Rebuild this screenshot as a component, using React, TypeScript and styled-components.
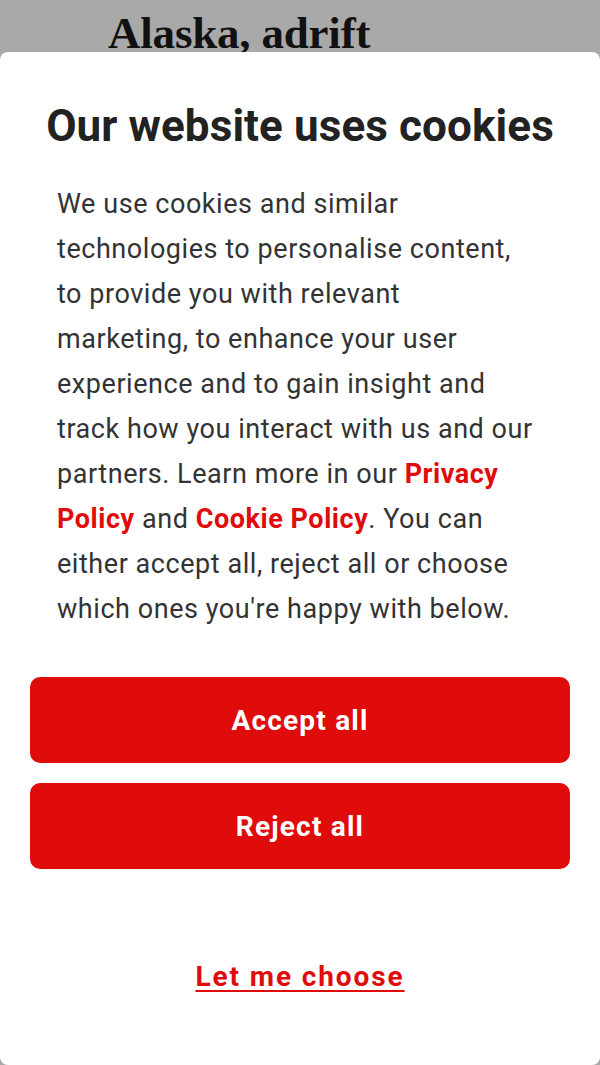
import styled, { createGlobalStyle } from 'styled-components'

const GlobalStyle = createGlobalStyle`
  html, body {
    margin: 0;
    padding: 0;
    background: #a9a9a9;
  }
  body {
    font-family: Roboto, "Noto Sans", sans-serif;
  }
`

function App() {
  return (
    <Page>
      <GlobalStyle />
      <Backdrop>
        <Headline>Alaska, adrift</Headline>
      </Backdrop>
      <Dialog>
        <Title>Our website uses cookies</Title>
        <Body>
          We use cookies and similar
          <br />
          technologies to personalise content,
          <br />
          to provide you with relevant
          <br />
          marketing, to enhance your user
          <br />
          experience and to gain insight and
          <br />
          track how you interact with us and our
          <br />
          partners. Learn more in our <Link href='#'>Privacy</Link>
          <br />
          <Link href='#'>Policy</Link> and <Link href='#'>Cookie Policy</Link>. You can
          <br />
          either accept all, reject all or choose
          <br />
          which ones you&apos;re happy with below.
        </Body>
        <Actions>
          <Button type='button'>Accept all</Button>
          <Button type='button'>Reject all</Button>
        </Actions>
        <Choose href='#'>Let me choose</Choose>
      </Dialog>
    </Page>
  )
}

const { Page, Backdrop, Headline, Dialog, Title, Body, Link, Actions, Button, Choose } = {
  Page: styled.div`
    width: 600px;
    height: 1065px;
    overflow: hidden;
    display: flex;
    flex-direction: column;
    background: #a9a9a9;
  `,
  Backdrop: styled.div`
    height: 52px;
    padding-left: 108px;
  `,
  Headline: styled.h1`
    margin: 0;
    padding-top: 14px;
    font-family: 'Liberation Serif', serif;
    font-size: 45px;
    font-weight: 700;
    line-height: 38px;
    color: #111;
    letter-spacing: -0.2px;
  `,
  Dialog: styled.div`
    flex: 1;
    display: flex;
    flex-direction: column;
    align-items: center;
    background: #fff;
    border-radius: 8px;
    padding: 46px 30px 0;
  `,
  Title: styled.h2`
    margin: 0;
    font-family: Roboto, sans-serif;
    font-size: 44px;
    font-weight: 700;
    line-height: 56px;
    color: #222;
    letter-spacing: 0.1px;
    text-align: center;
  `,
  Body: styled.p`
    margin: 28px 0 0;
    width: 486px;
    white-space: nowrap;
    font-family: Roboto, sans-serif;
    font-size: 27px;
    font-weight: 400;
    line-height: 45px;
    color: #333;
    letter-spacing: 0.55px;
  `,
  Link: styled.a`
    color: #e00b0b;
    font-weight: 700;
    text-decoration: none;
  `,
  Actions: styled.div`
    align-self: stretch;
    display: flex;
    flex-direction: column;
    gap: 20px;
    margin-top: 45px;
  `,
  Button: styled.button`
    height: 86px;
    border: none;
    border-radius: 10px;
    background: #e00b0b;
    color: #fff;
    font-family: Roboto, sans-serif;
    font-size: 28px;
    font-weight: 700;
    letter-spacing: 1.2px;
    cursor: pointer;
  `,
  Choose: styled.a`
    margin-top: 90px;
    color: #e00b0b;
    font-family: Roboto, sans-serif;
    font-size: 28px;
    font-weight: 700;
    line-height: 36px;
    letter-spacing: 1.9px;
    text-decoration: underline;
    text-decoration-thickness: 2px;
    text-underline-offset: 4px;
  `
}

export default App
